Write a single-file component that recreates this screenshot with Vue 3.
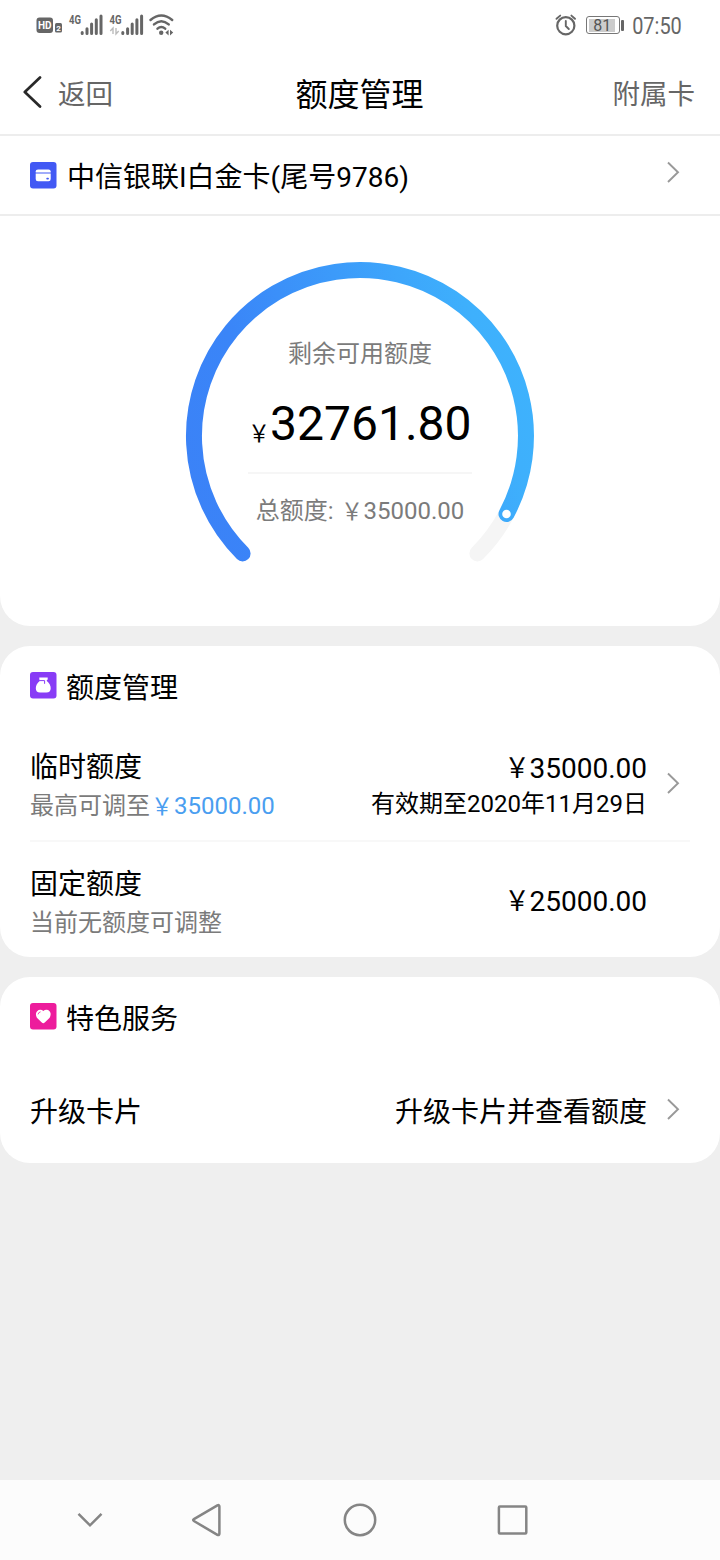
<script setup>
const card = '中信银联I白金卡(尾号9786)'
const limits = [
  {
    name: '临时额度',
    hint: '最高可调至',
    hintAmount: '35000.00',
    amount: '35000.00',
    note: '有效期至2020年11月29日',
    link: true,
  },
  { name: '固定额度', hint: '当前无额度可调整', amount: '25000.00' },
]
</script>

<template>
  <div class="screen">
    <div class="status">
      <svg class="status-left" width="150" height="50" viewBox="0 0 150 50">
        <rect x="6.5" y="17.5" width="16.5" height="15.5" rx="3" fill="#666" />
        <text x="14.8" y="29" class="badge-text" font-size="10" text-anchor="middle">HD</text>
        <rect x="25" y="23" width="7" height="9.5" rx="1.5" fill="#666" />
        <text x="28.5" y="31" class="badge-text" font-size="8" text-anchor="middle">2</text>
        <text x="39" y="24" class="net" textLength="12" lengthAdjust="spacingAndGlyphs">4G</text>
        <g stroke="#666" stroke-width="3" stroke-linecap="round">
          <path d="M52.2 32.5V33.4M57 28.8V33.4M61.6 24V33.4M66.3 19.7V33.4M71 16V33.4" />
          <path d="M92.8 32.5V33.4M97.6 28.8V33.4M102.2 24V33.4M106.9 19.7V33.4M111.6 16V33.4" />
        </g>
        <text x="79.5" y="24" class="net" textLength="12" lengthAdjust="spacingAndGlyphs">4G</text>
        <path d="M83 34V28L80.3 31M86 28V34L88.7 31" fill="none" stroke="#bbb" stroke-width="1.4" />
        <g fill="none" stroke="#666" stroke-width="2.5" stroke-linecap="round">
          <path d="M120.5 20Q131.3 11 142.2 20" />
          <path d="M124 24.4Q131.3 18 138.7 24.4" />
          <path d="M127.5 28.6Q131.3 25.4 135.2 28.6" />
        </g>
        <circle cx="131.2" cy="32.8" r="2.2" fill="#666" />
        <path d="M138.6 29.8V35.4L135.4 32.6ZM140 29.8V35.4L143.2 32.6Z" fill="#666" />
      </svg>
      <div class="status-right">
        <svg width="22" height="24" viewBox="0 0 22 24" fill="none" stroke="#666" stroke-linecap="round">
          <circle cx="10.8" cy="12.7" r="8.6" stroke-width="2.2" />
          <path d="M10.8 8V13L13.8 16M1.5 5.8L5.2 2.6M20 5.8L16.4 2.6" stroke-width="1.9" />
        </svg>
        <div class="battery"><span>81</span></div>
        <div class="battery-tip"></div>
        <div class="time">07:50</div>
      </div>
    </div>

    <header class="header">
      <div class="back">
        <svg width="20" height="34" viewBox="0 0 20 34">
          <path d="M17 2.5L1.8 17L17 31.5" fill="none" stroke="#292929" stroke-width="2.7" stroke-linecap="round" stroke-linejoin="round" />
        </svg>
        <span>返回</span>
      </div>
      <h1>额度管理</h1>
      <div class="extra">附属卡</div>
    </header>

    <section class="top">
      <div class="card-row">
        <svg class="tile" viewBox="0 0 27 27">
          <rect width="26.5" height="26.5" rx="3" fill="#4259f4" />
          <path d="M8 7.4H18.5Q20.7 7.4 20.7 9.4V10.4H5.7V9.4Q5.7 7.4 8 7.4Z" fill="#fff" />
          <path d="M5.7 11.5H20.7V17Q20.7 19.2 18.5 19.2H8Q5.7 19.2 5.7 17Z" fill="#fff" />
          <rect x="16.3" y="15.8" width="2.6" height="1.7" rx=".8" fill="#4259f4" />
        </svg>
        <div class="card-name">{{ card }}</div>
        <svg class="arrow" viewBox="0 0 16 24"><path d="M3 2.5L13 12.2L3 22" /></svg>
      </div>
      <div class="gauge">
        <svg class="ring" width="360" height="330" viewBox="180 250 360 330" fill="none" stroke-width="16" stroke-linecap="round">
          <defs>
            <linearGradient id="arc" gradientUnits="userSpaceOnUse" x1="186" y1="500" x2="534" y2="390">
              <stop offset="0" stop-color="#3b82f7" />
              <stop offset=".25" stop-color="#3a85f8" />
              <stop offset=".9" stop-color="#3eb0fc" />
              <stop offset="1" stop-color="#3eb2fd" />
            </linearGradient>
          </defs>
          <path d="M506.5 514A166 166 0 0 1 477.4 553.4" stroke="#f5f5f5" />
          <path d="M242.6 553.4A166 166 0 1 1 506.5 514" stroke="url(#arc)" />
          <circle cx="506.5" cy="514" r="4.3" fill="#fff" stroke="none" />
        </svg>
        <div class="gauge-info">
          <div class="label">剩余可用额度</div>
          <div class="remain"><small class="yen">￥</small>32761.80</div>
          <div class="total">总额度: <span class="yen">￥</span>35000.00</div>
        </div>
      </div>
    </section>

    <section class="panel limits">
      <div class="panel-title">
        <svg class="tile" viewBox="0 0 27 27">
          <rect width="26.5" height="26.5" rx="3" fill="#883cf6" />
          <path d="M9.3 5.4H17.7V7.5Q17 8 16.6 8.7Q20.7 12 20.7 16.3Q20.7 20.5 16.4 20.5H10Q5.8 20.5 5.8 16.3Q5.8 12 10 8.7Q9.8 8 9.3 7.5Z" fill="#fff" />
          <path d="M9.6 8.6H14.6V11.8" fill="none" stroke="#883cf6" stroke-width="1" />
        </svg>
        <h2>额度管理</h2>
      </div>
      <div v-for="item in limits" :key="item.name" class="row">
        <div class="left">
          <div class="name">{{ item.name }}</div>
          <div class="hint">{{ item.hint }}<span v-if="item.hintAmount" class="blue"><span class="yen">￥</span>{{ item.hintAmount }}</span></div>
        </div>
        <div class="right">
          <div class="amount"><span class="yen">￥</span>{{ item.amount }}</div>
          <div v-if="item.note" class="note">{{ item.note }}</div>
        </div>
        <svg v-if="item.link" class="arrow" viewBox="0 0 16 24"><path d="M3 2.5L13 12.2L3 22" /></svg>
        <div v-else class="arrow"></div>
      </div>
    </section>

    <section class="panel services">
      <div class="panel-title">
        <svg class="tile" viewBox="0 0 27 27">
          <rect width="26.5" height="26.5" rx="3" fill="#ed1c9c" />
          <path d="M13.3 20.2Q12.6 20.2 11.5 19.2L7.4 15.2Q5.6 13.2 6 10.6Q6.7 7 10.2 6.7Q12 6.6 13.3 8Q14.8 6.6 16.6 6.7Q20 7 20.6 10.6Q20.9 13.2 19.2 15.2L15 19.2Q14 20.2 13.3 20.2Z" fill="#fff" />
          <path d="M8.1 11Q8.4 9.2 10.2 8.9" fill="none" stroke="#ed1c9c" stroke-width=".8" stroke-linecap="round" />
        </svg>
        <h2>特色服务</h2>
      </div>
      <div class="service-row">
        <div>升级卡片</div>
        <div class="service-link">升级卡片并查看额度</div>
        <svg class="arrow" viewBox="0 0 16 24"><path d="M3 2.5L13 12.2L3 22" /></svg>
      </div>
    </section>

    <nav class="nav">
      <svg width="720" height="80" viewBox="0 0 720 80" fill="none" stroke="#858585" stroke-width="2.5" stroke-linecap="round" stroke-linejoin="round">
        <path d="M78.5 33.8L90 45.3L101.5 33.8" stroke-linecap="butt" stroke-linejoin="miter" />
        <path d="M217.4 25.4L193.9 39.2Q192.4 40.1 193.9 41L217.4 54.8Q219.4 55.8 219.4 53.6V26.6Q219.4 24.4 217.4 25.4Z" />
        <circle cx="360" cy="40" r="15.2" />
        <rect x="498.9" y="26.4" width="27.4" height="27.2" rx="1" />
      </svg>
    </nav>
  </div>
</template>

<style>
body {
  margin: 0;
  background: #efefef;
}
</style>

<style scoped>
.screen {
  display: flex;
  flex-direction: column;
  width: 720px;
  height: 1560px;
  background: #efefef;
  color: #000;
  font-family: Roboto, "Noto Sans CJK SC", sans-serif;
  font-size: 28px;
  overflow: hidden;
}
.screen * {
  box-sizing: border-box;
}
svg {
  display: block;
  flex: none;
}
h1, h2 {
  margin: 0;
  font-weight: 400;
}
.yen {
  display: inline-block;
  line-height: 1;
  transform: translateY(.03em) scaleX(.9);
}
.status {
  display: flex;
  justify-content: space-between;
  height: 50px;
  padding: 0 38px 0 30px;
  background: #fff;
  color: #666;
}
.badge-text {
  fill: #fff;
  font-family: Roboto, sans-serif;
  font-weight: 700;
}
.net {
  fill: #666;
  font-family: Roboto, sans-serif;
  font-size: 12px;
  font-weight: 700;
}
.status-right {
  display: flex;
  align-items: center;
}
.battery {
  width: 34px;
  height: 18px;
  margin-left: 9px;
  padding: 1.5px 2px;
  border: 1px solid #777;
  border-radius: 3px;
}
.battery span {
  display: block;
  width: 26px;
  height: 13px;
  background: #ccc;
  color: #555;
  font-size: 16px;
  line-height: 14px;
  text-align: center;
}
.battery-tip {
  width: 3px;
  height: 11px;
  margin: 0 8px 0 1px;
  border-radius: 1px;
  background: #666;
}
.time {
  padding-top: 2px;
  font-size: 24px;
  line-height: 50px;
  transform: scaleX(.83);
  transform-origin: right center;
  margin-left: -10px;
}
.header {
  display: grid;
  grid-template-columns: 1fr auto 1fr;
  height: 86px;
  padding: 0 24px 0 23px;
  border-bottom: 2px solid #ededed;
  background: #fff;
  color: #666;
  font-size: 27.5px;
  line-height: 90px;
}
.back {
  display: flex;
}
.back svg {
  margin: 25px 15px 0 0;
}
.header h1 {
  color: #000;
  font-size: 32px;
}
.extra {
  padding-right: 1px;
  text-align: right;
}
.top {
  height: 490px;
  border-radius: 0 0 30px 30px;
  background: #fff;
}
.card-row {
  display: flex;
  height: 80px;
  padding: 0 39px 0 30px;
  border-bottom: 2px solid #ededed;
}
.card-row .tile {
  margin-top: 26px;
}
.card-name {
  flex: 1;
  margin-left: 10px;
  line-height: 83px;
}
.tile {
  width: 27px;
  height: 27px;
}
.arrow {
  flex: none;
  width: 16px;
  height: 24px;
}
.arrow path {
  fill: none;
  stroke: #999;
  stroke-width: 1.9;
}
.card-row .arrow {
  margin-top: 24px;
}
.gauge {
  display: grid;
  justify-content: center;
  padding-top: 34px;
}
.ring, .gauge-info {
  grid-area: 1 / 1;
}
.gauge-info {
  display: flex;
  flex-direction: column;
  align-items: center;
  padding-top: 86px;
  color: #7b7b7b;
  font-size: 24px;
}
.label {
  line-height: 36px;
}
.remain {
  width: 224px;
  height: 79px;
  margin-top: 21px;
  color: #000;
  font-size: 48px;
  line-height: 62px;
  white-space: nowrap;
}
.remain small {
  margin-right: -2px;
  font-size: 24px;
  transform: translate(-1px, .07em) scaleX(.9);
}
.total {
  width: 224px;
  padding-top: 19px;
  border-top: 2px solid #f6f6f6;
  line-height: 36px;
  text-align: center;
}
.panel {
  margin-top: 20px;
  border-radius: 30px;
  background: #fff;
}
.limits {
  height: 311px;
}
.services {
  height: 186px;
}
.panel-title {
  display: flex;
  height: 80px;
  padding-left: 30px;
}
.panel-title .tile {
  margin-top: 26px;
}
.panel-title h2 {
  margin-left: 9px;
  font-size: 28px;
  line-height: 85px;
}
.row {
  display: flex;
  align-items: center;
  height: 114px;
  margin: 0 30px;
  padding: 0 9px 0 0;
}
.row + .row {
  height: 118px;
  border-top: 2px solid #f8f8f8;
}
.left {
  flex: 1;
  padding-top: 5px;
}
.name {
  line-height: 41px;
}
.hint {
  color: #7b7b7b;
  font-size: 24px;
  line-height: 36px;
}
.blue {
  color: #4a9ef0;
}
.right {
  margin-right: 18px;
  padding-top: 5px;
  text-align: right;
}
.amount {
  line-height: 36px;
}
.amount .yen {
  transform: translate(2px, .01em) scaleX(.9);
}
.row + .row .right {
  padding-top: 3px;
}
.note {
  font-size: 24px;
  line-height: 34px;
}
.service-row {
  display: flex;
  align-items: center;
  height: 104px;
  padding: 0 39px 0 30px;
  line-height: 40px;
}
.service-row > div {
  padding-top: 7px;
}
.service-link {
  flex: 1;
  margin-right: 18px;
  text-align: right;
}
.nav {
  height: 80px;
  margin-top: auto;
  background: #fcfcfc;
}
</style>
